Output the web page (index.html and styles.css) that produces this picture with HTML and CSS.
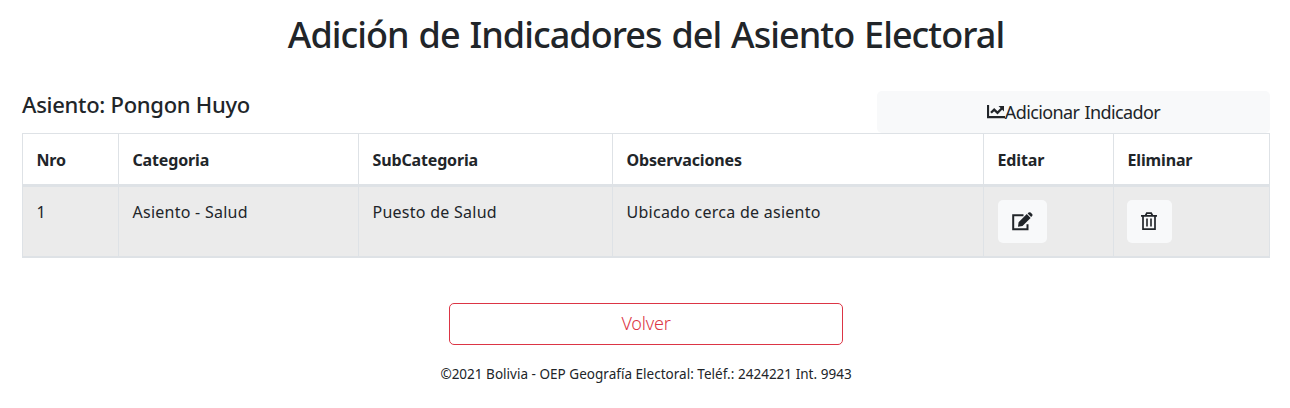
FILE: index.html
```html
<!DOCTYPE html>
<html lang="es">
<head>
<meta charset="utf-8">
<title>Adición de Indicadores del Asiento Electoral</title>
<link rel="stylesheet" href="styles.css">
</head>
<body>
<main class="page">
  <h1 class="title"><span>Adición de Indicadores del Asiento Electoral</span></h1>
  <div class="toolbar">
    <h2 class="seat"><span>Asiento: Pongon Huyo</span></h2>
    <button class="btn btn-add"><svg class="icon-chart" viewBox="0 0 18 14" aria-hidden="true"><path d="M1 0v12.2h17" fill="none" stroke="currentColor" stroke-width="2.2"/><path d="M4 7.8l3.2-3.2 3.3 3.2 4.5-4.6" fill="none" stroke="currentColor" stroke-width="2.3"/><path d="M11.5 1h5.5v5.5z" fill="currentColor"/></svg><span>Adicionar Indicador</span></button>
  </div>
  <table class="grid">
    <colgroup><col class="c-nro"><col class="c-cat"><col class="c-sub"><col class="c-obs"><col class="c-edit"><col class="c-del"></colgroup>
    <thead>
      <tr><th>Nro</th><th>Categoria</th><th>SubCategoria</th><th>Observaciones</th><th>Editar</th><th>Eliminar</th></tr>
    </thead>
    <tbody>
      <tr>
        <td>1</td><td>Asiento - Salud</td><td>Puesto de Salud</td><td>Ubicado cerca de asiento</td>
        <td><button class="btn btn-edit" aria-label="Editar"><svg class="icon-edit" viewBox="0 0 21 19" aria-hidden="true"><path d="M11.5 3.2H1.2v14h14.3v-5" fill="none" stroke="currentColor" stroke-width="2"/><path d="M6 14.8l.6-4.6 8.2-8.1 3.8 3.8-8.1 8.1zM15.6 1.6l1-1q1-.9 2 0l1.5 1.4q.9 1 0 2l-1 1z" fill="currentColor"/></svg></button></td>
        <td><button class="btn btn-del" aria-label="Eliminar"><svg class="icon-trash" viewBox="0 0 16 19" aria-hidden="true"><path d="M0 3.9h16M4.6 3.5l1.2-2.3h4.4l1.2 2.3M2 4v13.2h12V4" fill="none" stroke="currentColor" stroke-width="1.7"/><path d="M6 6.5v8M10 6.5v8" stroke="currentColor" stroke-width="1.6"/></svg></button></td>
      </tr>
    </tbody>
  </table>
  <button class="btn btn-back"><span>Volver</span></button>
  <footer class="footer"><span>©2021 Bolivia - OEP Geografía Electoral: Teléf.: 2424221 Int. 9943</span></footer>
</main>
</body>
</html>
```
FILE: styles.css
```css
* { box-sizing: border-box; }
body { margin: 0; background: #fff; color: #212529; font-family: "Noto Sans", "Open Sans", sans-serif; }
.page { width: 1248px; margin-left: 22px; padding-top: 13px; display: flex; flex-direction: column; }
.title { margin: 0; font-size: 36px; line-height: 44px; font-weight: 500; letter-spacing: -0.95px; word-spacing: 1.4px; text-align: center; white-space: nowrap; }
.toolbar { display: flex; justify-content: space-between; margin-top: 34px; height: 42px; }
.seat { margin: 0; font-size: 22px; line-height: 27px; font-weight: 500; letter-spacing: -0.28px; white-space: nowrap; }
.btn { font: inherit; color: inherit; border: 0; background: #f8f9fa; border-radius: 5px; padding: 0; display: flex; align-items: center; justify-content: center; }
.btn-add { width: 393px; padding-bottom: 1px; font-size: 18px; font-weight: 400; letter-spacing: -0.6px; word-spacing: 1px; }
.icon-chart { width: 18px; height: 14px; }
.grid { width: 1247px; border-collapse: collapse; table-layout: fixed; font-size: 16px; line-height: 24px; }
.grid th, .grid td { border: 1px solid #dee2e6; text-align: left; vertical-align: top; white-space: nowrap; }
.grid th { border-bottom: 3px solid #dee2e6; padding: 14px 13.5px 12px; font-weight: 700; letter-spacing: -0.15px; }
.grid tbody tr { background: #ebebeb; }
.grid td { border-bottom: 2px solid #dee2e6; height: 71px; padding: 13px 13.5px 12px; font-weight: 400; letter-spacing: 0.26px; }
.c-nro { width: 96px; } .c-cat { width: 240px; } .c-sub { width: 254px; }
.c-obs { width: 371px; } .c-edit { width: 130px; } .c-del { width: 156px; }
.btn-edit, .btn-del { height: 43px; padding-bottom: 1px; }
.btn-edit { width: 49px; }
.btn-del { width: 45px; margin-left: -0.6px; }
.icon-edit { width: 21px; height: 19px; }
.icon-trash { width: 16px; height: 19px; }
.btn-back { align-self: center; width: 394px; height: 42px; margin-top: 45px; padding-bottom: 1px; background: #fff; color: #dc3545; border: 1px solid #dc3545; font-size: 18px; font-weight: 300; letter-spacing: -0.2px; }
.footer { margin-top: 19px; text-align: center; font-size: 13.5px; line-height: 20px; letter-spacing: 0.02px; }
```
